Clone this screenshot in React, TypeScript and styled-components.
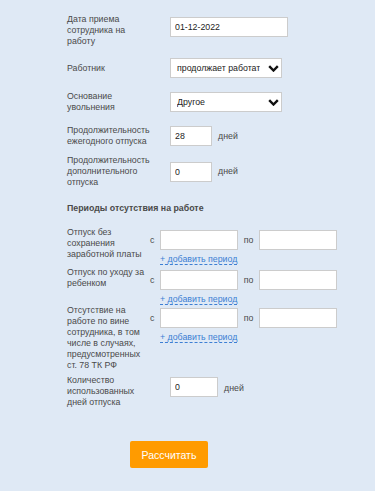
import styled, { createGlobalStyle } from 'styled-components';

const GlobalStyle = createGlobalStyle`
  html, body {
    margin: 0;
    padding: 0;
    background-color: #dfe9f5;
  }
  body {
    font-family: 'Liberation Sans', Arial, sans-serif;
  }
`;

const Page = styled.div`
  width: 375px;
  height: 491px;
  background-color: #dfe9f5;
  padding: 14px 0 0 67px;
  box-sizing: border-box;
  color: #4a4a4a;
  font-size: 8.8px;
  line-height: 11px;
`;

const Row = styled.div<{ $top: number; $align?: string }>`
  display: grid;
  grid-template-columns: 103px auto auto;
  justify-content: start;
  align-items: ${(p) => p.$align || 'center'};
  margin-top: ${(p) => p.$top}px;
`;

const Label = styled.div`
  width: 84px;
`;

const TextInput = styled.input<{ $w: number; $shift?: number }>`
  box-sizing: border-box;
  width: ${(p) => p.$w}px;
  height: 20px;
  margin: ${(p) => p.$shift || 0}px 0 0 0;
  padding: 0 0 0 4px;
  border: 1px solid #cccccc;
  background: #fff;
  font-family: 'Liberation Sans', Arial, sans-serif;
  font-size: 8.8px;
  color: #222;
  outline: none;
`;

const Unit = styled.span<{ $shift?: number }>`
  margin: ${(p) => p.$shift || 0}px 0 0 6px;
`;

const SelectBox = styled.div`
  position: relative;
  width: 112px;
  height: 20px;
`;

const Select = styled.select`
  appearance: none;
  -webkit-appearance: none;
  box-sizing: border-box;
  width: 100%;
  height: 100%;
  margin: 0;
  padding: 0 21px 0 6px;
  border: 1px solid #cccccc;
  border-radius: 0;
  background: #fff;
  font-family: 'Liberation Sans', Arial, sans-serif;
  font-size: 8.8px;
  color: #222;
  outline: none;
`;

const Chevron = styled.svg`
  position: absolute;
  right: 3px;
  top: 7px;
  pointer-events: none;
`;

const Heading = styled.div`
  margin-top: 15px;
  font-weight: bold;
  font-size: 8.8px;
  color: #4a4a4a;
`;

const PeriodRow = styled.div<{ $top: number }>`
  display: grid;
  grid-template-columns: 83px 10px 78px 21px 78px;
  grid-template-rows: 23px 1fr;
  align-items: center;
  margin-top: ${(p) => p.$top}px;
`;

const PeriodLabel = styled.div`
  grid-row: 1 / span 2;
  align-self: start;
  width: 80px;
`;

const Mark = styled.span<{ $center?: boolean }>`
  text-align: ${(p) => (p.$center ? 'center' : 'left')};
  margin-top: 3px;
`;

const PeriodInput = styled.input`
  box-sizing: border-box;
  width: 78px;
  height: 20px;
  margin: 2px 0 0 0;
  border: 1px solid #cccccc;
  background: #fff;
  outline: none;
`;

const AddLink = styled.a`
  grid-column: 3 / span 3;
  grid-row: 2;
  align-self: start;
  justify-self: start;
  margin-top: 4px;
  color: #3c7fd4;
  text-decoration: none;
  border-bottom: 1px dashed #3c7fd4;
  line-height: 10px;
  cursor: pointer;
`;

const ButtonRow = styled.div`
  display: flex;
  padding-left: 63px;
  margin-top: 33px;
`;

const CalcButton = styled.button`
  width: 78px;
  height: 27px;
  border: none;
  border-radius: 2px;
  background-color: #ff9b00;
  color: #fff;
  font-family: 'Liberation Sans', Arial, sans-serif;
  font-size: 10.5px;
  cursor: pointer;
`;

const ChevronIcon = () => (
  <Chevron width="11" height="7" viewBox="0 0 11 7">
    <path d="M1.2 1.2 L5.5 5.5 L9.8 1.2" fill="none" stroke="#111" strokeWidth="2.4" />
  </Chevron>
);

const periods = [
  { label: 'Отпуск без сохранения заработной платы', top: 13 },
  { label: 'Отпуск по уходу за ребенком', top: 2 },
  {
    label:
      'Отсутствие на работе по вине сотрудника, в том числе в случаях, предусмотренных ст. 78 ТК РФ',
    top: 0,
  },
];

function App() {
  return (
    <Page>
      <GlobalStyle />
      <Row $top={0} $align="start">
        <Label>Дата приема сотрудника на работу</Label>
        <TextInput $w={118} $shift={3} defaultValue="01-12-2022" />
      </Row>
      <Row $top={11}>
        <Label>Работник</Label>
        <SelectBox>
          <Select defaultValue="works">
            <option value="works">продолжает работать</option>
            <option value="fired">уволен</option>
          </Select>
          <ChevronIcon />
        </SelectBox>
      </Row>
      <Row $top={13}>
        <Label>Основание увольнения</Label>
        <SelectBox>
          <Select defaultValue="other">
            <option value="other">Другое</option>
          </Select>
          <ChevronIcon />
        </SelectBox>
      </Row>
      <Row $top={12}>
        <Label>Продолжительность ежегодного отпуска</Label>
        <TextInput $w={42} defaultValue="28" />
        <Unit>дней</Unit>
      </Row>
      <Row $top={8}>
        <Label>Продолжительность дополнительного отпуска</Label>
        <TextInput $w={42} defaultValue="0" />
        <Unit>дней</Unit>
      </Row>
      <Heading>Периоды отсутствия на работе</Heading>
      {periods.map((p) => (
        <PeriodRow key={p.label} $top={p.top}>
          <PeriodLabel>{p.label}</PeriodLabel>
          <Mark>с</Mark>
          <PeriodInput />
          <Mark $center>по</Mark>
          <PeriodInput />
          <AddLink>+ добавить период</AddLink>
        </PeriodRow>
      ))}
      <Row $top={4} $align="start">
        <Label>Количество использованных дней отпуска</Label>
        <TextInput $w={48} $shift={2} defaultValue="0" />
        <Unit $shift={8}>дней</Unit>
      </Row>
      <ButtonRow>
        <CalcButton>Рассчитать</CalcButton>
      </ButtonRow>
    </Page>
  );
}

export default App;
